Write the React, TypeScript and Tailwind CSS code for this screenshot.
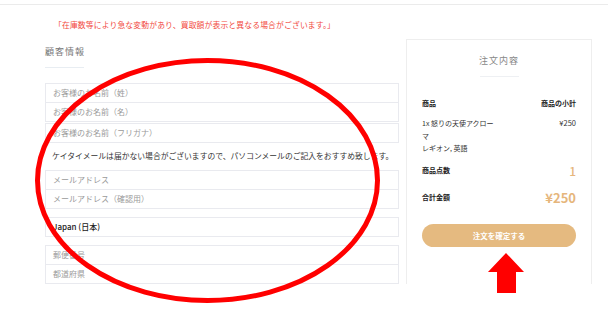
import type { ReactNode } from 'react';

const font = { fontFamily: '"Noto Sans CJK JP", "Noto Sans", sans-serif' };

function Field({ children, dark = false, className = '' }: { children: ReactNode; dark?: boolean; className?: string }) {
  return (
    <div
      className={`flex h-[20px] items-center border border-[#e9eaef] px-[7px] text-[8px] ${
        dark ? 'font-medium text-[#222]' : 'text-[#9a9a9a]'
      } ${className}`}
    >
      {children}
    </div>
  );
}

export default function App() {
  return (
    <div className="relative h-[316px] w-[608px] overflow-hidden bg-white" style={font}>
      {/* header edge */}
      <div className="h-[5px] border-b border-[#ebebeb]" />

      {/* stock notice */}
      <p className="mt-[14px] pl-[54px] text-[7.8px] leading-[12px] tracking-[0.15px] text-[#f24b3f]">
        「在庫数等により急な変動があり、買取額が表示と異なる場合がございます。」
      </p>

      <div className="mt-[8px] flex gap-[7px] pl-[45px]">
        {/* customer info */}
        <div className="w-[354px]">
          <h2 className="pt-[7px] text-[9px] leading-[12px] tracking-[1px] text-[#777]">顧客情報</h2>
          <div className="mt-[9px] h-px w-[39px] bg-[#e8edf2]" />

          <div className="mt-[15px]">
            <Field>お客様のお名前（姓）</Field>
            <Field className="-mt-px">お客様のお名前（名）</Field>
            <Field className="mt-px">お客様のお名前（フリガナ）</Field>
          </div>

          <p className="mt-[7px] whitespace-nowrap pl-[7px] text-[7.8px] leading-[12px] text-[#333]">
            ケイタイメールは届かない場合がございますので、パソコンメールのご記入をおすすめ致します。
          </p>

          <div className="mt-[8px]">
            <Field>メールアドレス</Field>
            <Field className="-mt-px">メールアドレス（確認用）</Field>
          </div>

          <Field dark className="mt-[8px] h-[19px]">
            Japan (日本)
          </Field>

          <div className="mt-[8px]">
            <Field>郵便番号</Field>
            <Field className="-mt-px">都道府県</Field>
          </div>
        </div>

        {/* order summary */}
        <div className="h-[245px] w-[186px] border-x border-t border-[#eeeeee] px-[15px]">
          <h3 className="pt-[14px] text-center text-[9px] leading-[14px] tracking-[1px] text-[#888]">注文内容</h3>
          <div className="mx-auto mt-[8px] h-px w-[39px] bg-[#eef0f3]" />

          <div className="mt-[20px] flex justify-between text-[7px] font-bold leading-[12px] text-[#222]">
            <span>商品</span>
            <span>商品の小計</span>
          </div>

          <div className="mt-[8px] flex justify-between text-[7px] leading-[12.5px] text-[#333]">
            <span className="w-[76px]">
              1x 怒りの天使アクローマ
              <br />
              レギオン, 英語
            </span>
            <span className="text-[7.5px]">¥250</span>
          </div>

          <div className="mt-[7px] flex items-center justify-between">
            <span className="text-[7px] font-bold text-[#222]">商品点数</span>
            <span className="text-[12px] font-medium text-[#e6b67c]">1</span>
          </div>

          <div className="mt-[8px] flex items-center justify-between">
            <span className="text-[7px] font-bold text-[#222]">合計金額</span>
            <span className="text-[13px] font-semibold text-[#e6b67c]">¥250</span>
          </div>

          <button className="mt-[17px] flex h-[23px] w-full items-center justify-center rounded-full bg-[#e5ba80] text-[7.5px] font-bold text-white">
            注文を確定する
          </button>
        </div>
      </div>

      {/* annotation overlay */}
      <svg className="pointer-events-none absolute left-0 top-0" width="608" height="316" viewBox="0 0 608 316">
        <ellipse cx="207.5" cy="180.5" rx="170" ry="120" fill="none" stroke="#ff0000" strokeWidth="5" />
        <polygon points="506,253 524,272 516,272 516,293 497,293 497,272 488,272" fill="#ff0000" />
      </svg>
    </div>
  );
}
